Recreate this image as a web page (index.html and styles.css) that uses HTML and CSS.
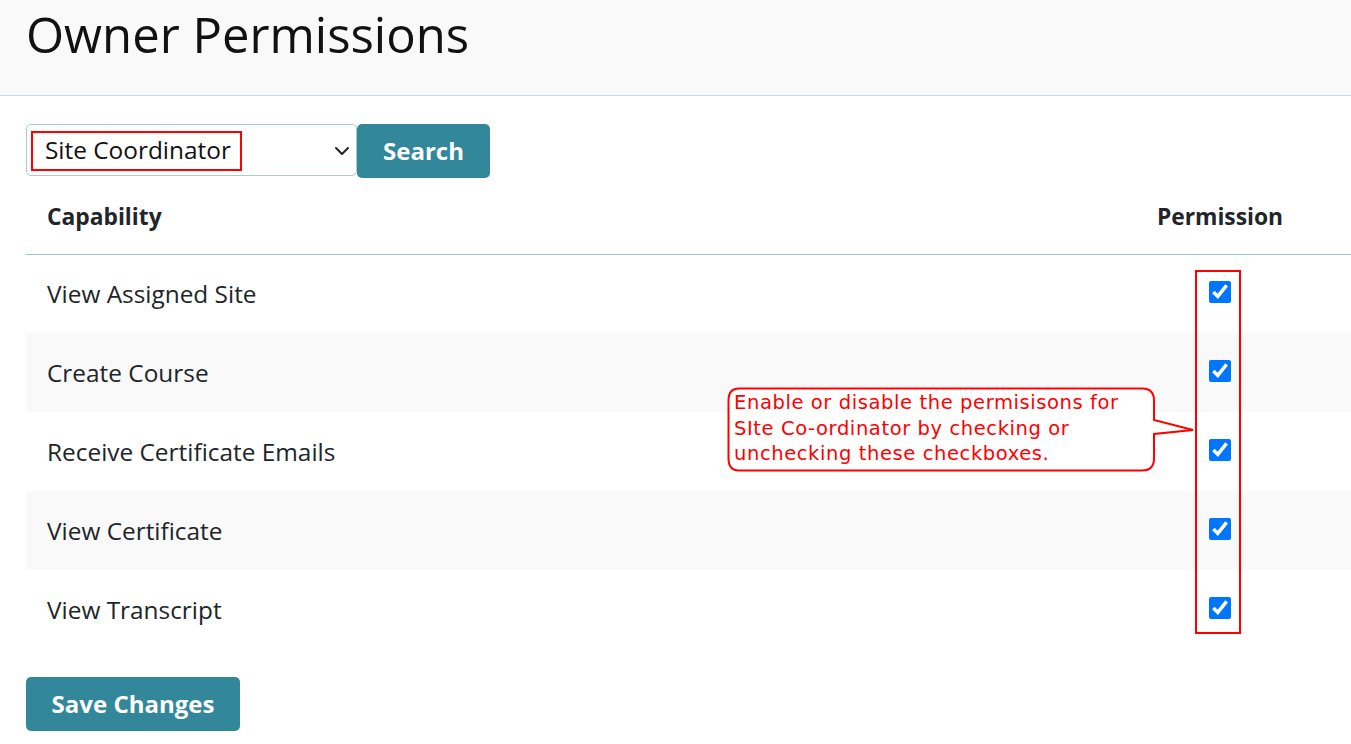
FILE: index.html
```html
<!DOCTYPE html>
<html>
<head>
<meta charset="utf-8">
<link rel="stylesheet" href="styles.css">
</head>
<body>
<header class="page-header">
  <h1 class="title">Owner Permissions</h1>
</header>
<main class="content">
  <div class="search-row">
    <div class="select-wrap">
      <select class="role-select">
        <option>Site Coordinator</option>
      </select>
      <svg class="chevron" width="16" height="10" viewBox="0 0 16 10"><path d="M2 2l6 6 6-6" fill="none" stroke="#222" stroke-width="2" stroke-linecap="round" stroke-linejoin="round"/></svg>
      <span class="mark-select"></span>
    </div>
    <button class="btn">Search</button>
  </div>
  <div class="table-wrap">
    <table class="perm-table">
      <thead>
        <tr><th class="cap">Capability</th><th class="perm">Permission</th></tr>
      </thead>
      <tbody>
        <tr><td class="cap">View Assigned Site</td><td class="perm"><input type="checkbox" checked></td></tr>
        <tr class="alt"><td class="cap">Create Course</td><td class="perm"><input type="checkbox" checked></td></tr>
        <tr><td class="cap">Receive Certificate Emails</td><td class="perm"><input type="checkbox" checked></td></tr>
        <tr class="alt"><td class="cap">View Certificate</td><td class="perm"><input type="checkbox" checked></td></tr>
        <tr><td class="cap">View Transcript</td><td class="perm"><input type="checkbox" checked></td></tr>
      </tbody>
    </table>
    <span class="mark-checks"></span>
    <div class="callout">
      <svg class="callout-shape" width="470" height="90" viewBox="0 0 470 90">
        <path d="M12 1.5 H415 Q427 1.5 427 13.5 V33 L466 43 L427 47 V71.5 Q427 83.5 415 83.5 H12 Q1.5 83.5 1.5 71.5 V13.5 Q1.5 1.5 12 1.5 Z" fill="#fff" stroke="#f00" stroke-width="2"/>
      </svg>
      <p class="callout-text">Enable or disable the permisisons for<br>SIte Co-ordinator by checking or<br>unchecking these checkboxes.</p>
    </div>
  </div>
  <button class="btn btn-save">Save Changes</button>
</main>
</body>
</html>
```

FILE: styles.css
```css
* { box-sizing: border-box; }
html, body { margin: 0; padding: 0; }
body {
  font-family: "Open Sans", "Noto Sans", sans-serif;
  color: #212529;
  background: #fff;
  overflow: hidden;
  width: 1351px;
  height: 744px;
}
.page-header {
  background: #f9f9f9;
  border-bottom: 1px solid #c9dde4;
  height: 96px;
  padding: 0 0 0 26px;
}
.title {
  margin: 0;
  font-weight: 400;
  font-size: 49px;
  line-height: 68px;
  color: #111;
}
.content {
  padding: 28px 0 0 26px;
}
.search-row {
  display: flex;
  align-items: flex-start;
}
.select-wrap {
  position: relative;
  width: 331px;
  height: 52px;
}
.role-select {
  appearance: none;
  -webkit-appearance: none;
  width: 100%;
  height: 100%;
  border: 1px solid #a8cbd6;
  border-radius: 5px;
  background: #fff;
  font-family: "Open Sans", sans-serif;
  font-size: 24.4px;
  color: #111;
  padding: 0 0 2px 18px;
}
.chevron {
  position: absolute;
  left: 308px;
  top: 22px;
  pointer-events: none;
}
.mark-select {
  position: absolute;
  left: 5px;
  top: 7px;
  width: 211px;
  height: 40px;
  border: 2px solid #f00;
}
.btn {
  background: #32879b;
  color: #fff;
  border: none;
  border-radius: 5px;
  font-family: "Open Sans", sans-serif;
  font-weight: 700;
  font-size: 24px;
  height: 54px;
  width: 133px;
  padding: 0 0 2px;
}
.table-wrap {
  position: relative;
}
.perm-table {
  width: 1325px;
  border-collapse: collapse;
}
.perm-table th {
  height: 76px;
  font-size: 22.8px;
  font-weight: 700;
  text-align: left;
  border-bottom: 1px solid #9ec5d2;
  padding: 2px 21px 0;
}
.perm-table td {
  height: 79px;
  font-size: 24.4px;
  padding: 0 21px 1px;
}
.perm-table .perm {
  width: 262px;
  text-align: center;
}
.perm-table tr.alt td { background: #f9f9f9; }
.perm-table input {
  display: block;
  width: 22px;
  height: 22px;
  margin: 0 auto;
  accent-color: #0075ff;
  position: relative;
  top: -1px;
}
.mark-checks {
  position: absolute;
  left: 1169px;
  top: 92px;
  width: 46px;
  height: 364px;
  border: 2px solid #f00;
}
.callout {
  position: absolute;
  left: 701px;
  top: 209px;
  width: 470px;
  height: 90px;
}
.callout-shape {
  position: absolute;
  left: 0;
  top: 0;
}
.callout-text {
  position: relative;
  margin: 0;
  padding: 3px 0 0 7px;
  white-space: nowrap;
  font-family: "DejaVu Sans", sans-serif;
  font-size: 19.5px;
  letter-spacing: 0.6px;
  line-height: 25.5px;
  color: #f00;
}
.btn-save {
  margin-top: 28px;
  width: 214px;
}
```
